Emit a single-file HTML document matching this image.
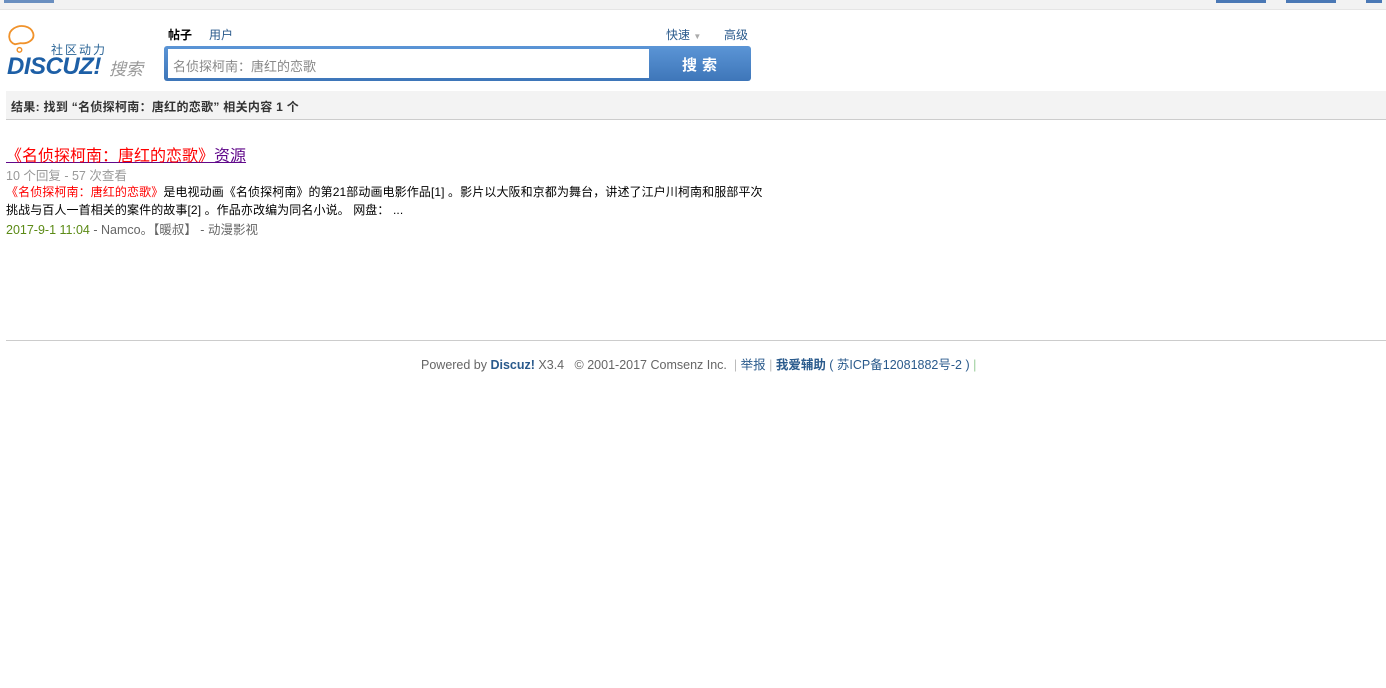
<!DOCTYPE html>
<html><head><meta charset="utf-8"><style>
*{margin:0;padding:0;box-sizing:border-box}
body{width:1386px;height:688px;background:#fff;font:12px "Liberation Sans","Noto Sans CJK SC",sans-serif;color:#333;position:relative;overflow:hidden}
.abs{position:absolute;white-space:nowrap}
a{color:#333}
</style></head><body>
<div class="abs" style="left:0;top:0;width:1386px;height:10px;background:#f2f2f2;border-bottom:1px solid #e5e5e5"></div>
<div class="abs" style="left:4px;top:0;width:50px;height:3px;background:#6a8fc0"></div>
<div class="abs" style="left:1216px;top:0;width:166px;height:3px;background:linear-gradient(90deg,#4a78b5 0 50px,transparent 50px 70px,#4a78b5 70px 120px,transparent 120px 150px,#4a78b5 150px 166px)"></div>
<svg class="abs" style="left:7px;top:25px" width="34" height="34" viewBox="0 0 30 30"><path d="M7 17 C1 15 0 7 6 3 C12 -1 21 1 23 7 C25 13 18 17 12 16 L7 17 Z" fill="none" stroke="#f0922b" stroke-width="1.6"/><circle cx="11" cy="22" r="2" fill="none" stroke="#f0922b" stroke-width="1.3"/></svg>
<div class="abs" style="left:51px;top:41px;font-size:12px;color:#2a6496;letter-spacing:2px">社区动力</div>
<div class="abs" style="left:7px;top:53px;font:italic bold 24px 'Liberation Sans',sans-serif;color:#1d5fa6;letter-spacing:-0.5px">DISCUZ!</div>
<div class="abs" style="left:109px;top:55px;font-size:17px;font-style:italic;color:#999">搜索</div>
<div class="abs" style="left:168px;top:26px;font-weight:bold;color:#000">帖子</div>
<div class="abs" style="left:209px;top:26px;color:#2a5a8c">用户</div>
<div class="abs" style="left:666px;top:26px;color:#2a5a8c">快速 <span style="color:#aaa;font-size:8px">▼</span></div>
<div class="abs" style="left:724px;top:26px;color:#2a5a8c">高级</div>
<div class="abs" style="left:164px;top:46px;width:587px;height:35px;background:linear-gradient(#5b95d6,#3e76b9);border-radius:3px"></div>
<div class="abs" style="left:168px;top:49px;width:481px;height:29px;background:#fff"></div>
<div class="abs" style="left:173px;top:56px;font-size:13px;color:#888">名侦探柯南：唐红的恋歌</div>
<div class="abs" style="left:682px;top:54px;font-size:15px;font-weight:bold;color:#fff;letter-spacing:5px">搜索</div>
<div class="abs" style="left:6px;top:91px;width:1380px;height:29px;background:#f3f3f3;border-bottom:1px solid #ccc"></div>
<div class="abs" style="left:11px;top:98px;font-weight:bold;color:#333;letter-spacing:0.3px">结果: 找到 “名侦探柯南：唐红的恋歌” 相关内容 1 个</div>
<div class="abs" style="left:6px;top:142px;font-size:16px;text-decoration:underline;color:#60088a"><span style="color:#f00">《名侦探柯南：唐红的恋歌》</span>资源</div>
<div class="abs" style="left:6px;top:165px;color:#999;font-size:12.5px">10 个回复 - 57 次查看</div>
<div class="abs" style="left:6px;top:183px;color:#000;line-height:18px;letter-spacing:0.1px"><span style="color:#f00">《名侦探柯南：唐红的恋歌》</span>是电视动画《名侦探柯南》的第21部动画电影作品[1] 。影片以大阪和京都为舞台，讲述了江户川柯南和服部平次<br>挑战与百人一首相关的案件的故事[2] 。作品亦改编为同名小说。 网盘： ...</div>
<div class="abs" style="left:6px;top:219px;color:#666;font-size:12.5px"><span style="color:#5b8a15">2017-9-1 11:04</span> - <a style="color:#666">Namco。【暖叔】</a> - <a style="color:#666">动漫影视</a></div>
<div class="abs" style="left:6px;top:340px;width:1380px;height:1px;background:#ccc"></div>
<div class="abs" style="left:421px;top:354px;color:#666;font-size:12.5px">Powered by <b style="color:#2a5a8c">Discuz!</b> X3.4 &nbsp; © 2001-2017 Comsenz Inc. &nbsp;<span style="color:#bbb">|</span> <span style="color:#2a5a8c">举报</span> <span style="color:#bbb">|</span> <b style="color:#2a5a8c">我爱辅助</b><span style="color:#2a5a8c"> ( 苏ICP备12081882号-2 )</span> <span style="color:#9c9">|</span></div>
</body></html>
